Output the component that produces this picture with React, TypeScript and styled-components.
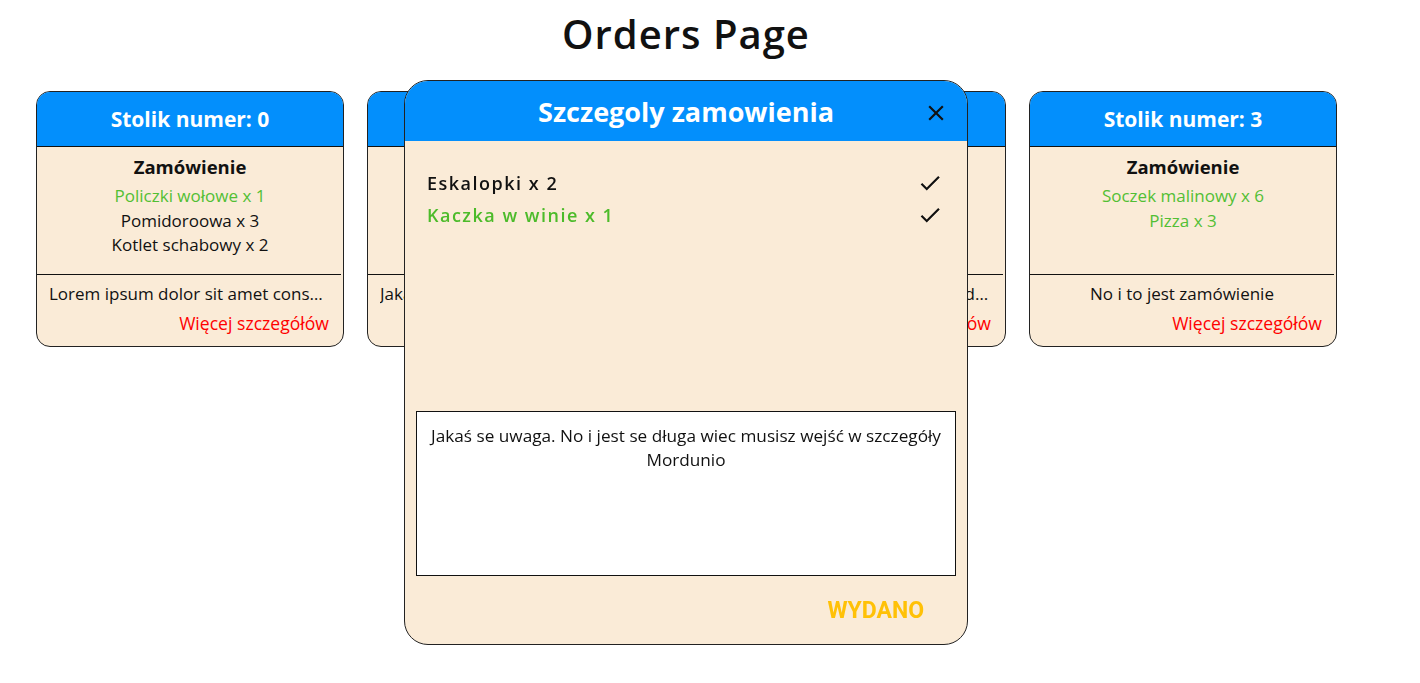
import React from 'react';
import styled, { createGlobalStyle } from 'styled-components';

const GlobalStyle = createGlobalStyle`
  body {
    margin: 0;
    background: white;
    font-family: 'Segoe UI', 'Open Sans', 'Noto Sans', sans-serif;
    color: #111;
  }
`;

type OrderItem = { name: string; count: number; ready?: boolean };
type Order = { table: number; items: OrderItem[]; note: string };

const orders: Order[] = [
  {
    table: 0,
    items: [
      { name: 'Policzki wołowe', count: 1, ready: true },
      { name: 'Pomidoroowa', count: 3 },
      { name: 'Kotlet schabowy', count: 2 },
    ],
    note: 'Lorem ipsum dolor sit amet consectetur adipiscing elit',
  },
  {
    table: 1,
    items: [
      { name: 'Eskalopki', count: 2 },
      { name: 'Kaczka w winie', count: 1, ready: true },
    ],
    note: 'Jakaś se uwaga. No i jest se długa wiec musisz wejść w szczegóły Mordunio',
  },
  {
    table: 2,
    items: [
      { name: 'Rosół', count: 2 },
      { name: 'Pierogi ruskie', count: 4 },
    ],
    note: 'Bez cebuli prosze, klient jest bardzo wybredny i marudzi',
  },
  {
    table: 3,
    items: [
      { name: 'Soczek malinowy', count: 6, ready: true },
      { name: 'Pizza', count: 3, ready: true },
    ],
    note: 'No i to jest zamówienie',
  },
];

const PageDiv = styled.div`
  width: 1372px;
  padding-top: 6px;
`;

const TitleH = styled.h1`
  margin: 0;
  text-align: center;
  font-size: 40px;
  font-weight: 600;
  letter-spacing: 1px;
  line-height: 56px;
`;

const CardsRow = styled.div`
  display: flex;
  gap: 23px;
  padding: 29px 0 0 36px;
`;

const CardDiv = styled.div`
  width: 308px;
  height: 256px;
  box-sizing: border-box;
  border: 1px solid #222;
  border-radius: 14px;
  overflow: hidden;
  background: #faebd7;
  display: flex;
  flex-direction: column;
`;

const CardHeader = styled.div`
  height: 54px;
  background: #038ffc;
  border-bottom: 1px solid #111;
  display: flex;
  align-items: center;
  justify-content: center;
  color: white;
  font-size: 21px;
  font-weight: 700;
`;

const CardBody = styled.div`
  height: 127px;
  padding-top: 8px;
  box-sizing: border-box;
  text-align: center;
`;

const OrderLabel = styled.div`
  font-size: 18.5px;
  font-weight: 700;
  line-height: 24px;
  margin-bottom: 5px;
`;

const ItemLine = styled.div<{ $ready?: boolean }>`
  font-size: 17px;
  line-height: 24.5px;
  color: ${(p) => (p.$ready ? '#52bf34' : '#111')};
`;

const Divider = styled.div`
  height: 1px;
  background: #111;
  margin-right: 2px;
`;

const CardFooter = styled.div`
  padding: 7px 14px 0 12px;
  display: flex;
  flex-direction: column;
`;

const NoteSpn = styled.div`
  font-size: 17px;
  line-height: 24px;
  text-align: center;
  white-space: nowrap;
  overflow: hidden;
  text-overflow: ellipsis;
`;

const MoreLink = styled.div`
  align-self: flex-end;
  margin-top: 5px;
  font-size: 17.6px;
  line-height: 24px;
  color: #ff0000;
  cursor: pointer;
`;

const ModalDiv = styled.div`
  position: fixed;
  left: 404px;
  top: 80px;
  width: 564px;
  height: 565px;
  box-sizing: border-box;
  border: 1px solid #222;
  border-radius: 24px;
  overflow: hidden;
  background: #faebd7;
  display: flex;
  flex-direction: column;
`;

const ModalHeader = styled.div`
  position: relative;
  height: 60px;
  background: #038ffc;
  display: flex;
  align-items: center;
  justify-content: center;
  color: white;
  font-size: 27px;
  font-weight: 700;
`;

const CloseBtn = styled.button`
  position: absolute;
  right: 18px;
  top: 19px;
  border: none;
  background: none;
  padding: 0;
  display: flex;
  cursor: pointer;
`;

const ItemsList = styled.div`
  flex: 1;
  padding: 29px 24px 0 22px;
  display: flex;
  flex-direction: column;
  gap: 6px;
`;

const ItemRow = styled.div<{ $ready?: boolean }>`
  display: flex;
  align-items: center;
  justify-content: space-between;
  height: 26px;
  font-size: 18px;
  font-weight: 600;
  letter-spacing: 1.5px;
  color: ${(p) => (p.$ready ? '#4cbb2a' : '#111')};
`;

const NoteBox = styled.div`
  margin: 0 11px;
  height: 165px;
  box-sizing: border-box;
  border: 1px solid #111;
  background: white;
  padding: 12px 4px;
  text-align: center;
  font-size: 17.2px;
  line-height: 24px;
`;

const ModalFooter = styled.div`
  height: 68px;
  display: flex;
  align-items: center;
  justify-content: flex-end;
  padding: 0 43px 0 0;
`;

const IssueBtn = styled.button`
  border: none;
  background: none;
  font-family: Roboto, sans-serif;
  font-weight: 700;
  font-size: 23px;
  color: #ffc107;
  text-transform: uppercase;
  cursor: pointer;
  padding: 0;
  margin-top: 1px;
`;

function CheckIcon() {
  return (
    <svg width="26" height="26" viewBox="0 0 24 24" fill="#111">
      <path d="M9 16.17 4.83 12l-1.42 1.41L9 19 21 7l-1.41-1.41z" />
    </svg>
  );
}

function CloseIcon() {
  return (
    <svg width="26" height="26" viewBox="0 0 24 24" fill="#111">
      <path d="M19 6.41 17.59 5 12 10.59 6.41 5 5 6.41 10.59 12 5 17.59 6.41 19 12 13.41 17.59 19 19 17.59 13.41 12z" />
    </svg>
  );
}

function OrderCard(props: { order: Order }) {
  const { order } = props;
  return (
    <CardDiv>
      <CardHeader>Stolik numer: {order.table}</CardHeader>
      <CardBody>
        <OrderLabel>Zamówienie</OrderLabel>
        {order.items.map((item) => (
          <ItemLine key={item.name} $ready={item.ready}>
            {item.name} x {item.count}
          </ItemLine>
        ))}
      </CardBody>
      <Divider />
      <CardFooter>
        <NoteSpn>{order.note}</NoteSpn>
        <MoreLink>Więcej szczegółów</MoreLink>
      </CardFooter>
    </CardDiv>
  );
}

function OrderDetails(props: { order: Order }) {
  return (
    <ModalDiv>
      <ModalHeader>
        Szczegoly zamowienia
        <CloseBtn aria-label="close">
          <CloseIcon />
        </CloseBtn>
      </ModalHeader>
      <ItemsList>
        {props.order.items.map((item) => (
          <ItemRow key={item.name} $ready={item.ready}>
            <span>
              {item.name} x {item.count}
            </span>
            <CheckIcon />
          </ItemRow>
        ))}
      </ItemsList>
      <NoteBox>{props.order.note}</NoteBox>
      <ModalFooter>
        <IssueBtn>Wydano</IssueBtn>
      </ModalFooter>
    </ModalDiv>
  );
}

export default function App() {
  return (
    <PageDiv>
      <GlobalStyle />
      <TitleH>Orders Page</TitleH>
      <CardsRow>
        {orders.map((order) => (
          <OrderCard key={order.table} order={order} />
        ))}
      </CardsRow>
      <OrderDetails order={orders[1]} />
    </PageDiv>
  );
}
